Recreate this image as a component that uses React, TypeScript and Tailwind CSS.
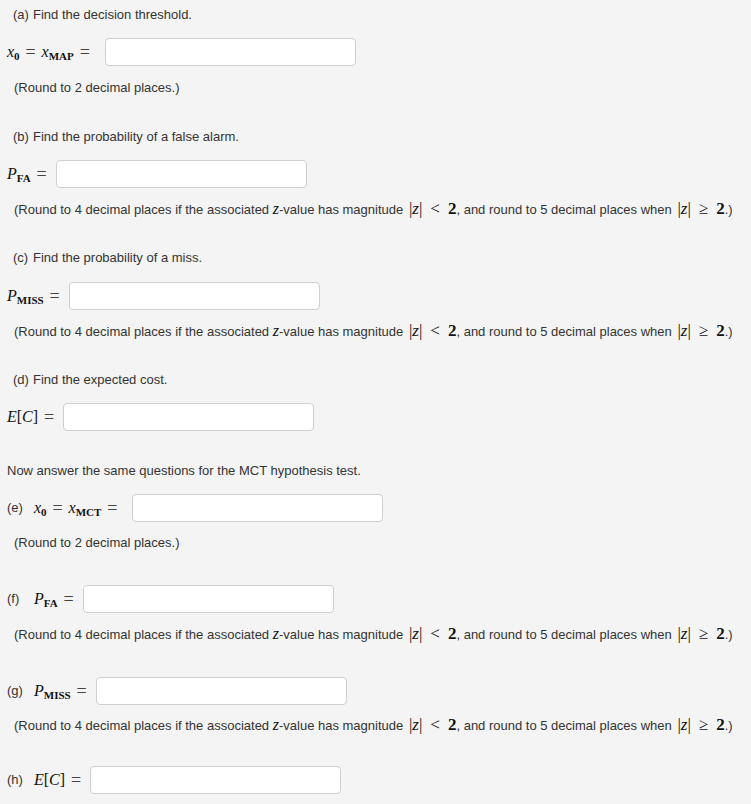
import React from 'react';

const serif = "font-['Liberation_Serif','DejaVu_Serif',serif]";

function V({ children }: { children: React.ReactNode }) {
  // italic math variable
  return <span className="italic">{children}</span>;
}

function Sub({ children }: { children: React.ReactNode }) {
  return <span className="relative top-[4px] text-[11px] font-bold not-italic">{children}</span>;
}

function Eq() {
  return <span className="mx-[5px] inline-block w-[12px] text-center text-[18px] leading-none text-[#444]">=</span>;
}

function Input() {
  return (
    <input
      type="text"
      className="h-[28px] w-[251px] shrink-0 rounded-[4px] border border-[#cfcfcf] bg-white px-2 text-[13px] outline-none"
    />
  );
}

function Round2() {
  return <div className="h-[18px] pl-[7px] leading-[18px]">(Round to 2 decimal places.)</div>;
}

function ZAbs({ op }: { op: string }) {
  return (
    <span className={`${serif} ml-[2px] text-[17px] text-[#111]`}>
      |<V>z</V>|<span className="mx-[8px]">{op}</span>
      <span className="font-bold">2</span>
    </span>
  );
}

function RoundZ() {
  return (
    <div className="h-[18px] whitespace-nowrap pl-[7px] leading-[18px]">
      (Round to 4 decimal places if the associated{' '}
      <span className={`${serif} text-[16px] text-[#111]`}><V>z</V></span>-value has magnitude{' '}
      <ZAbs op="<" />, and round to 5 decimal places when <ZAbs op="≥" />.)
    </div>
  );
}

function Heading({ tag, text }: { tag: string; text: string }) {
  return (
    <div className="flex h-[18px] items-center pl-[6px]">
      <span className="w-[20px]">{tag}</span>
      <span>{text}</span>
    </div>
  );
}

function MathRow({ tag, children }: { tag?: string; children: React.ReactNode }) {
  return (
    <div className="flex h-[28px] items-center">
      {tag && <span className="w-[27px] shrink-0">{tag}</span>}
      <span className={`${serif} mr-[3px] flex items-center whitespace-nowrap text-[16px] text-[#111]`}>
        {children}
      </span>
      <Input />
    </div>
  );
}

const X0MAP = (
  <>
    <V>x</V><Sub>0</Sub><Eq /><V>x</V><Sub>MAP</Sub><Eq /><span className="w-[6px]" />
  </>
);
const X0MCT = (
  <>
    <V>x</V><Sub>0</Sub><Eq /><V>x</V><Sub>MCT</Sub><Eq /><span className="w-[6px]" />
  </>
);
const PFA = (
  <>
    <V>P</V><Sub>FA</Sub><Eq />
  </>
);
const PMISS = (
  <>
    <V>P</V><Sub>MISS</Sub><Eq />
  </>
);
const EC = (
  <>
    <V>E</V>[<V>C</V>]<Eq />
  </>
);

export default function App() {
  return (
    <div className="min-h-screen bg-[#f4f4f4] pl-[7px] pt-[6px] font-['Liberation_Sans',Arial,sans-serif] text-[13px] text-[#333]">
      <Heading tag="(a)" text="Find the decision threshold." />
      <div className="mt-[14px]"><MathRow>{X0MAP}</MathRow></div>
      <div className="mt-[13px]"><Round2 /></div>

      <div className="mt-[31px]"><Heading tag="(b)" text="Find the probability of a false alarm." /></div>
      <div className="mt-[14px]"><MathRow>{PFA}</MathRow></div>
      <div className="mt-[12px]"><RoundZ /></div>

      <div className="mt-[31px]"><Heading tag="(c)" text="Find the probability of a miss." /></div>
      <div className="mt-[15px]"><MathRow>{PMISS}</MathRow></div>
      <div className="mt-[12px]"><RoundZ /></div>

      <div className="mt-[31px]"><Heading tag="(d)" text="Find the expected cost." /></div>
      <div className="mt-[14px]"><MathRow>{EC}</MathRow></div>

      <div className="mt-[31px] h-[18px] leading-[18px]">Now answer the same questions for the MCT hypothesis test.</div>
      <div className="mt-[14px]"><MathRow tag="(e)">{X0MCT}</MathRow></div>
      <div className="mt-[12px]"><Round2 /></div>

      <div className="mt-[33px]"><MathRow tag="(f)">{PFA}</MathRow></div>
      <div className="mt-[12px]"><RoundZ /></div>

      <div className="mt-[34px]"><MathRow tag="(g)">{PMISS}</MathRow></div>
      <div className="mt-[11px]"><RoundZ /></div>

      <div className="mt-[32px]"><MathRow tag="(h)">{EC}</MathRow></div>
    </div>
  );
}
